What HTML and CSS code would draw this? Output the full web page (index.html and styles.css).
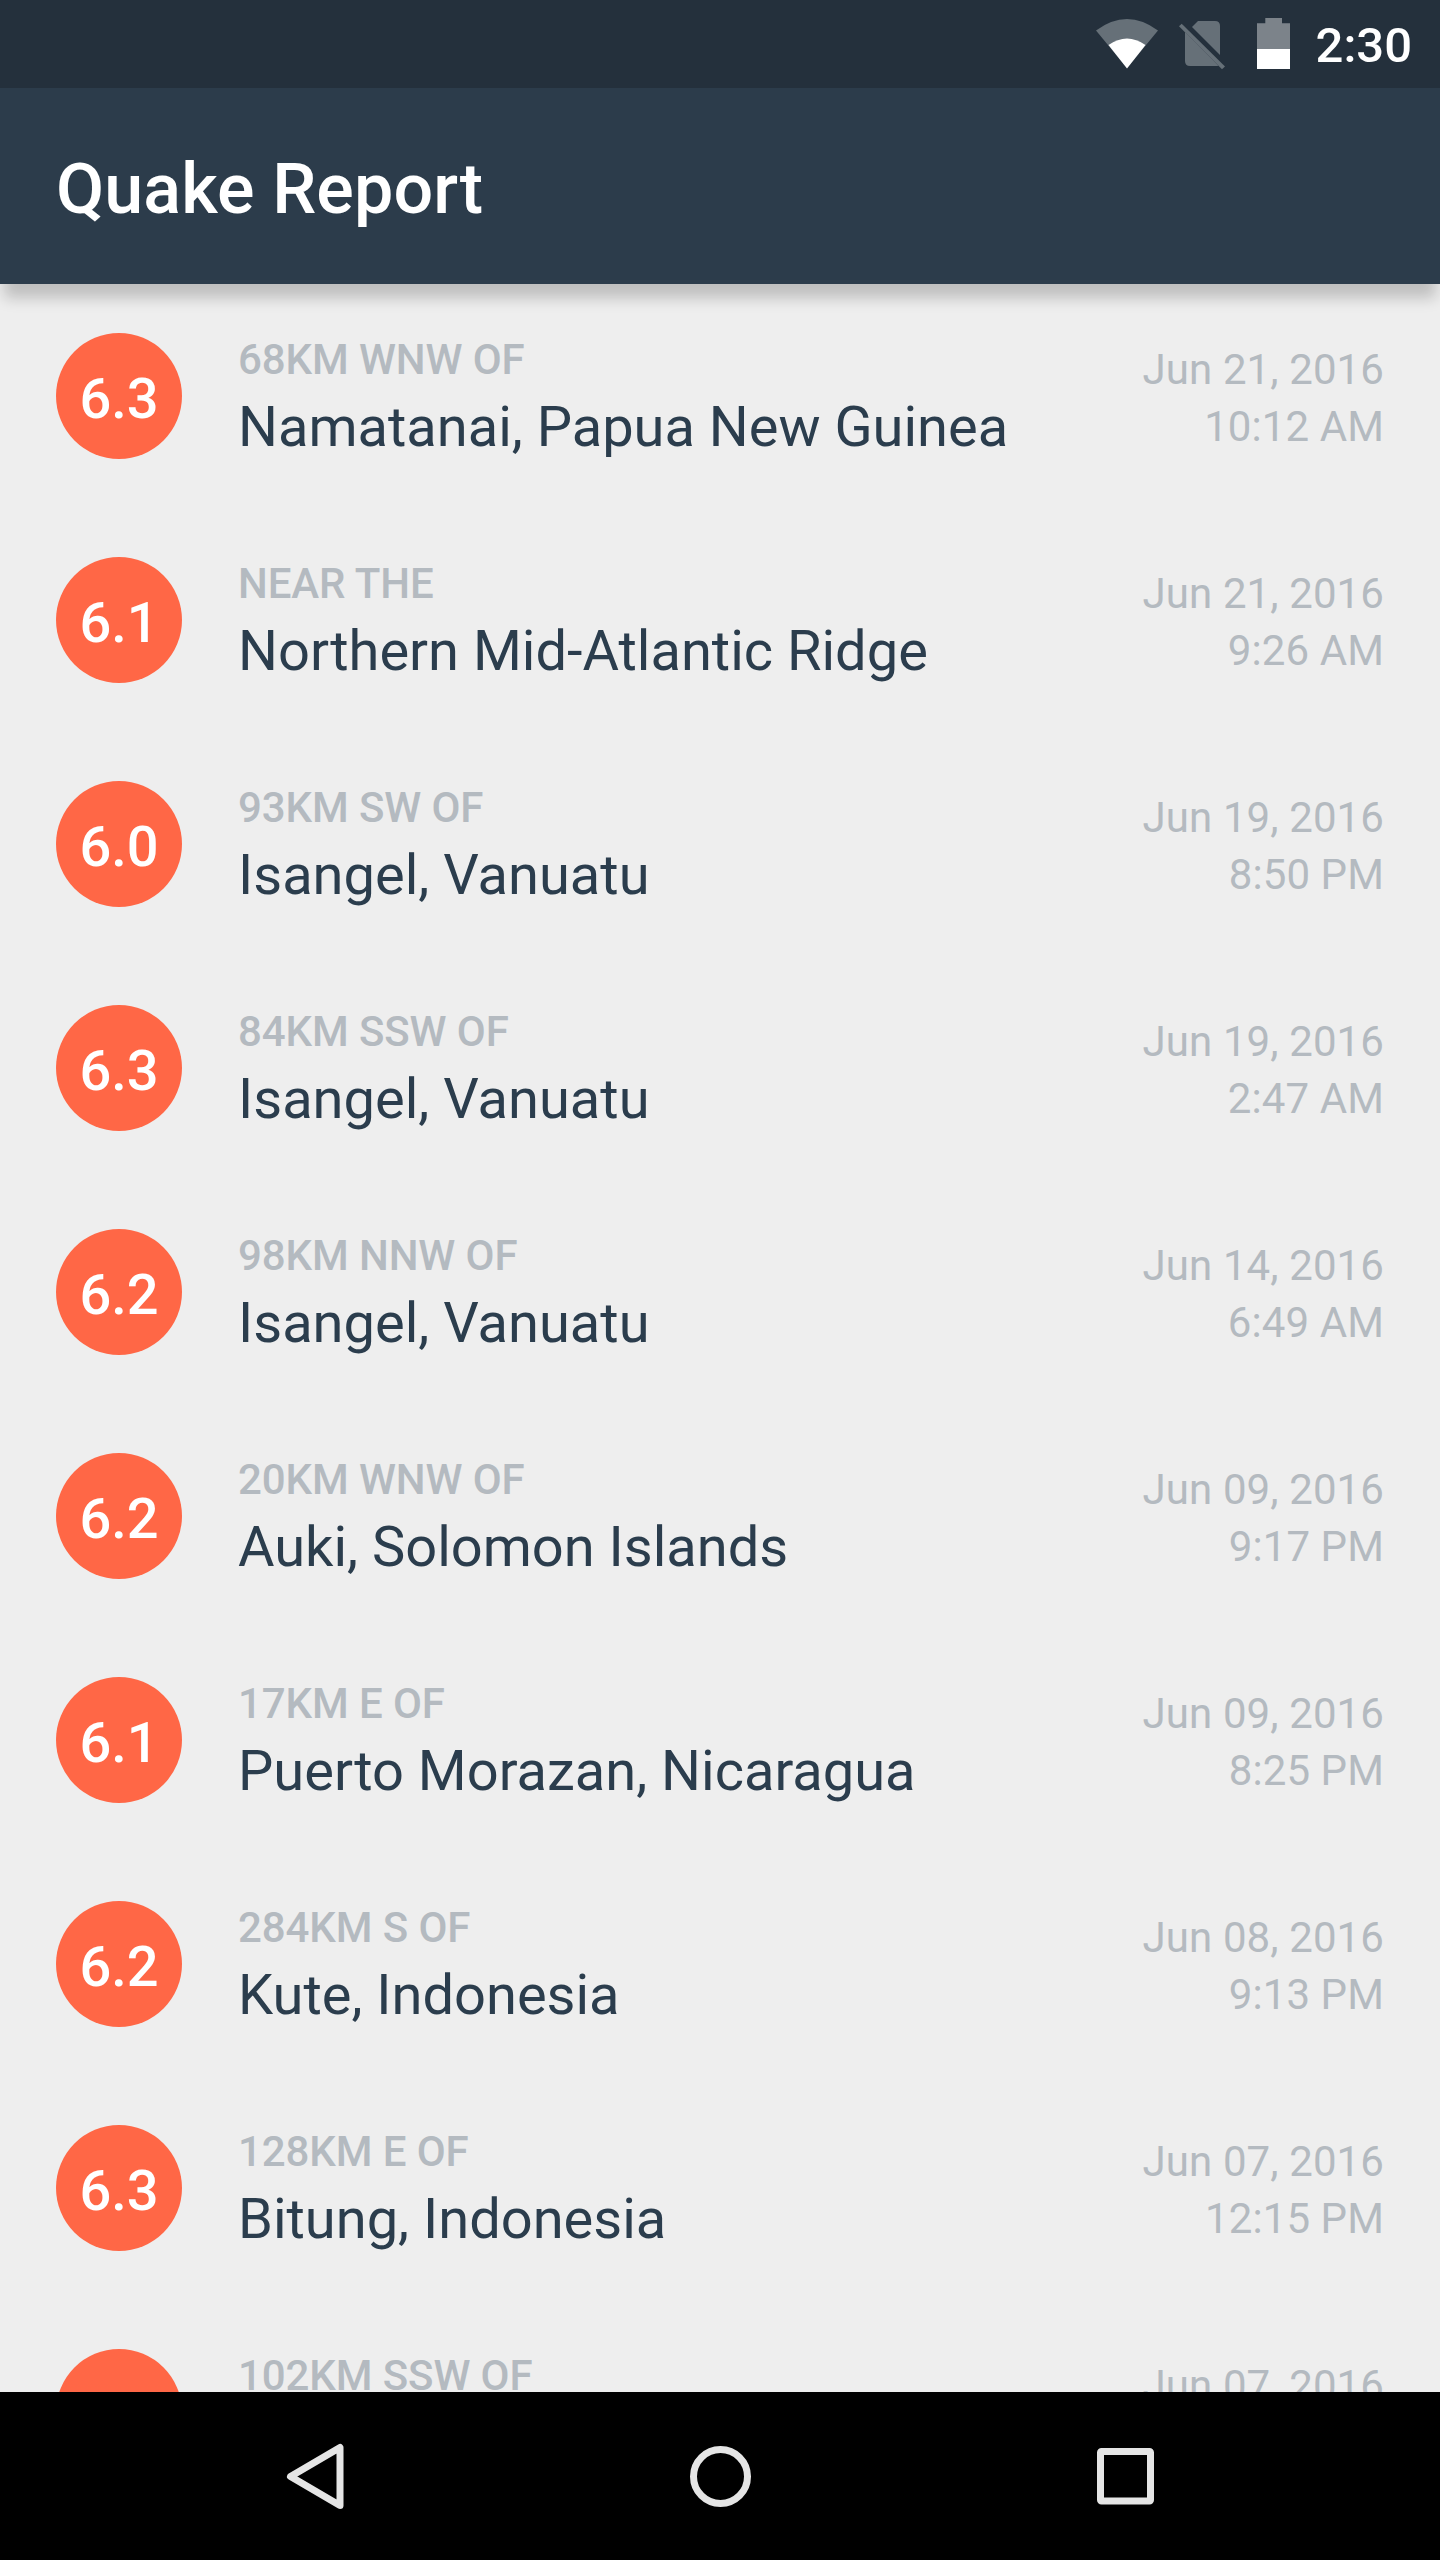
FILE: index.html
```html
<!DOCTYPE html>
<html lang="en">
<head>
<meta charset="utf-8">
<title>Quake Report</title>
<link rel="stylesheet" href="styles.css">
</head>
<body>
<div class="screen">
  <div class="status">
    <svg class="wifi" width="62" height="50" viewBox="0 0 62 50"><path fill="#667078" d="M0 11.500Q31-11.500 62 11.500L31 49Z"/><path fill="#fff" d="M12.500 26Q31 13 49.500 26L31 49.500Z"/></svg>
    <svg class="sim" width="46" height="49" viewBox="0 0 46 49"><g fill="#667078"><path d="M0 5.300L2.700 2.700L46 45.500L43 48.300Z"/><path d="M6 11L39.500 44.700Q38 45 36 45H11Q6 45 6 40Z"/><path d="M13 6L19 0H36Q41 0 41 5V34Z"/></g></svg>
    <svg class="battery" width="33" height="51" viewBox="0 0 33 51"><path fill="#7c838a" d="M0 5.300H8.300V0H25V5.300H33V31H0Z"/><path fill="#fff" d="M0 31H33V51H0Z"/></svg>
    <span class="clock">2:30</span>
  </div>
  <header class="appbar"><h1 class="title">Quake Report</h1></header>
  <main class="list">
    <div class="row"><div class="mag">6.3</div><div class="place"><div class="offset">68KM WNW OF</div><div class="name">Namatanai, Papua New Guinea</div></div><div class="when">Jun 21, 2016<br>10:12 AM</div></div>
    <div class="row"><div class="mag">6.1</div><div class="place"><div class="offset">NEAR THE</div><div class="name">Northern Mid-Atlantic Ridge</div></div><div class="when">Jun 21, 2016<br>9:26 AM</div></div>
    <div class="row"><div class="mag">6.0</div><div class="place"><div class="offset">93KM SW OF</div><div class="name">Isangel, Vanuatu</div></div><div class="when">Jun 19, 2016<br>8:50 PM</div></div>
    <div class="row"><div class="mag">6.3</div><div class="place"><div class="offset">84KM SSW OF</div><div class="name">Isangel, Vanuatu</div></div><div class="when">Jun 19, 2016<br>2:47 AM</div></div>
    <div class="row"><div class="mag">6.2</div><div class="place"><div class="offset">98KM NNW OF</div><div class="name">Isangel, Vanuatu</div></div><div class="when">Jun 14, 2016<br>6:49 AM</div></div>
    <div class="row"><div class="mag">6.2</div><div class="place"><div class="offset">20KM WNW OF</div><div class="name">Auki, Solomon Islands</div></div><div class="when">Jun 09, 2016<br>9:17 PM</div></div>
    <div class="row"><div class="mag">6.1</div><div class="place"><div class="offset">17KM E OF</div><div class="name">Puerto Morazan, Nicaragua</div></div><div class="when">Jun 09, 2016<br>8:25 PM</div></div>
    <div class="row"><div class="mag">6.2</div><div class="place"><div class="offset">284KM S OF</div><div class="name">Kute, Indonesia</div></div><div class="when">Jun 08, 2016<br>9:13 PM</div></div>
    <div class="row"><div class="mag">6.3</div><div class="place"><div class="offset">128KM E OF</div><div class="name">Bitung, Indonesia</div></div><div class="when">Jun 07, 2016<br>12:15 PM</div></div>
    <div class="row"><div class="mag"></div><div class="place"><div class="offset">102KM SSW OF</div></div><div class="when">Jun 07, 2016</div></div>
  </main>
  <nav class="navbar">
    <svg width="100" height="100" viewBox="0 0 100 100"><path d="M70 17.500V75.500L20.500 46.500Z"/></svg>
    <svg width="100" height="100" viewBox="0 0 100 100"><circle cx="47.500" cy="46.500" r="27"/></svg>
    <svg width="100" height="100" viewBox="0 0 100 100"><rect x="25.500" y="21.500" width="50" height="49.500" rx="1"/></svg>
  </nav>
</div>
</body>
</html>
```
FILE: styles.css
```css
body { margin: 0; font-family: Roboto, sans-serif; }
.screen { width: 1440px; height: 2560px; display: flex; flex-direction: column; overflow: hidden; background: #eee; }
.status { height: 88px; flex: none; box-sizing: border-box; background: #24303c; display: flex; justify-content: flex-end; align-items: flex-start; padding-right: 28px; }
.wifi { margin: 19px 21px 0 0; }
.sim { margin: 21px 32px 0 0; }
.battery { margin: 18px 26px 0 0; }
.clock { color: #fff; font-size: 49px; font-weight: 500; line-height: 58px; margin-top: 17px; }
.appbar { height: 196px; flex: none; box-sizing: border-box; background: #2c3c4b; padding: 6px 56px 0; display: flex; align-items: center; box-shadow: 0 18px 14px -4px rgba(0, 0, 0, .2); z-index: 1; }
.title { margin: 0; color: #fff; font-size: 70px; font-weight: 500; line-height: 82px; letter-spacing: .1px; }
.list { flex: 1; min-height: 0; overflow: hidden; }
.row { height: 224px; box-sizing: border-box; padding: 0 56px; display: flex; align-items: flex-start; }
.mag { width: 126px; height: 126px; box-sizing: border-box; flex: none; margin-top: 49px; padding-top: 6px; border-radius: 50%; background: #ff6746; color: #fff; font-size: 56px; font-weight: 500; line-height: 120px; text-align: center; }
.place { flex: 1; margin-left: 56px; padding-top: 51px; }
.offset { color: #b4bac0; font-size: 42px; font-weight: 500; line-height: 50px; letter-spacing: -.1px; }
.name { color: #2b3d4d; font-size: 56px; line-height: 84px; }
.when { padding-top: 57px; color: #b4bac0; font-size: 42px; line-height: 57px; letter-spacing: .1px; text-align: right; }
.navbar { height: 168px; flex: none; box-sizing: border-box; background: #000; display: flex; justify-content: space-between; align-items: flex-start; padding: 38px 265px 0 270px; }
.navbar svg { fill: none; stroke: #e5e5e5; stroke-width: 7; stroke-linejoin: round; }
```
